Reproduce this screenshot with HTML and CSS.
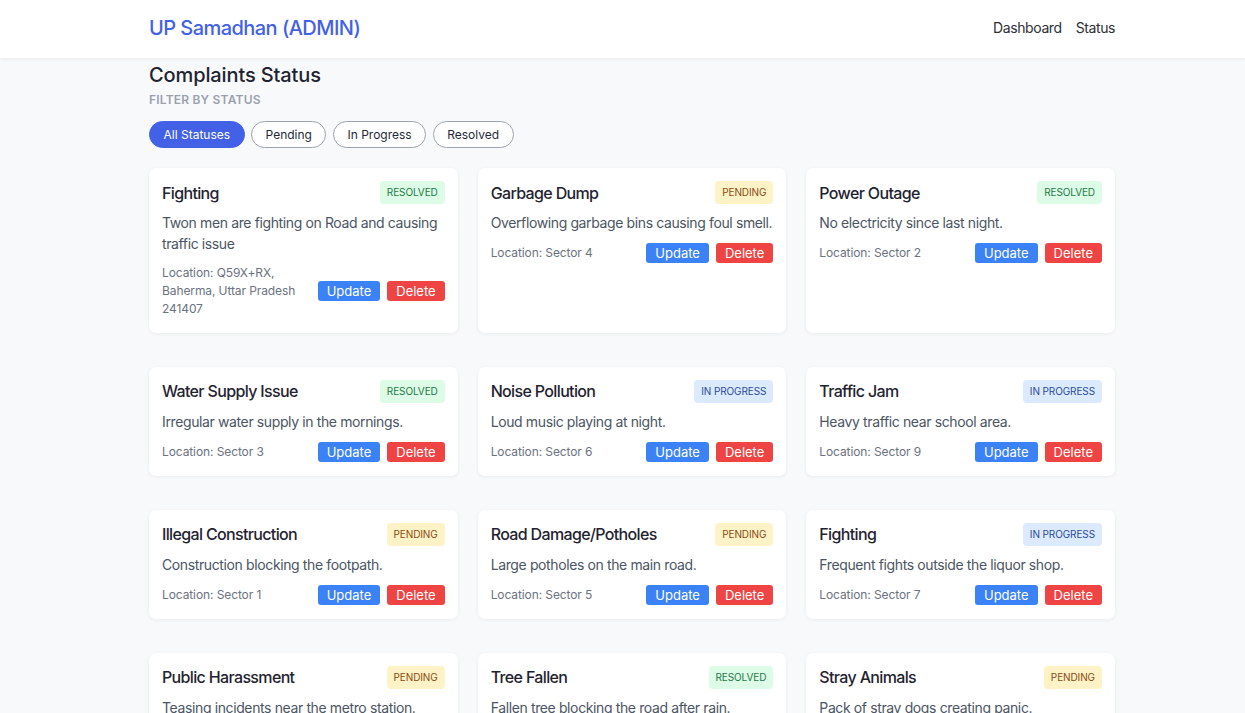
FILE: index.html
```html
<!DOCTYPE html>
<html lang="en">
<head>
<meta charset="utf-8">
<title>UP Samadhan (ADMIN)</title>
<link rel="stylesheet" href="styles.css">
</head>
<body>
<header class="topbar">
  <div class="wrap topbar-inner">
    <div class="brand">UP Samadhan (ADMIN)</div>
    <nav class="nav">
      <a href="#">Dashboard</a>
      <a href="#">Status</a>
    </nav>
  </div>
</header>
<main class="wrap">
  <h1 class="page-title">Complaints Status</h1>
  <div class="filter-label">Filter by status</div>
  <div class="filters">
    <button class="pill active">All Statuses</button>
    <button class="pill">Pending</button>
    <button class="pill">In Progress</button>
    <button class="pill">Resolved</button>
  </div>
  <div class="grid">
    <div class="card">
      <div class="card-head"><h3>Fighting</h3><span class="badge resolved">Resolved</span></div>
      <p class="desc">Twon men are fighting on Road and causing traffic issue</p>
      <div class="card-foot"><span class="loc">Location: Q59X+RX, Baherma, Uttar Pradesh 241407</span><div class="actions"><button class="btn upd">Update</button><button class="btn del">Delete</button></div></div>
    </div>
    <div class="card">
      <div class="card-head"><h3>Garbage Dump</h3><span class="badge pending">Pending</span></div>
      <p class="desc">Overflowing garbage bins causing foul smell.</p>
      <div class="card-foot"><span class="loc">Location: Sector 4</span><div class="actions"><button class="btn upd">Update</button><button class="btn del">Delete</button></div></div>
    </div>
    <div class="card">
      <div class="card-head"><h3>Power Outage</h3><span class="badge resolved">Resolved</span></div>
      <p class="desc">No electricity since last night.</p>
      <div class="card-foot"><span class="loc">Location: Sector 2</span><div class="actions"><button class="btn upd">Update</button><button class="btn del">Delete</button></div></div>
    </div>

    <div class="card">
      <div class="card-head"><h3>Water Supply Issue</h3><span class="badge resolved">Resolved</span></div>
      <p class="desc">Irregular water supply in the mornings.</p>
      <div class="card-foot"><span class="loc">Location: Sector 3</span><div class="actions"><button class="btn upd">Update</button><button class="btn del">Delete</button></div></div>
    </div>
    <div class="card">
      <div class="card-head"><h3>Noise Pollution</h3><span class="badge progress">In Progress</span></div>
      <p class="desc">Loud music playing at night.</p>
      <div class="card-foot"><span class="loc">Location: Sector 6</span><div class="actions"><button class="btn upd">Update</button><button class="btn del">Delete</button></div></div>
    </div>
    <div class="card">
      <div class="card-head"><h3>Traffic Jam</h3><span class="badge progress">In Progress</span></div>
      <p class="desc">Heavy traffic near school area.</p>
      <div class="card-foot"><span class="loc">Location: Sector 9</span><div class="actions"><button class="btn upd">Update</button><button class="btn del">Delete</button></div></div>
    </div>

    <div class="card">
      <div class="card-head"><h3>Illegal Construction</h3><span class="badge pending">Pending</span></div>
      <p class="desc">Construction blocking the footpath.</p>
      <div class="card-foot"><span class="loc">Location: Sector 1</span><div class="actions"><button class="btn upd">Update</button><button class="btn del">Delete</button></div></div>
    </div>
    <div class="card">
      <div class="card-head"><h3>Road Damage/Potholes</h3><span class="badge pending">Pending</span></div>
      <p class="desc">Large potholes on the main road.</p>
      <div class="card-foot"><span class="loc">Location: Sector 5</span><div class="actions"><button class="btn upd">Update</button><button class="btn del">Delete</button></div></div>
    </div>
    <div class="card">
      <div class="card-head"><h3>Fighting</h3><span class="badge progress">In Progress</span></div>
      <p class="desc">Frequent fights outside the liquor shop.</p>
      <div class="card-foot"><span class="loc">Location: Sector 7</span><div class="actions"><button class="btn upd">Update</button><button class="btn del">Delete</button></div></div>
    </div>

    <div class="card">
      <div class="card-head"><h3>Public Harassment</h3><span class="badge pending">Pending</span></div>
      <p class="desc">Teasing incidents near the metro station.</p>
      <div class="card-foot"><span class="loc">Location: Sector 8</span><div class="actions"><button class="btn upd">Update</button><button class="btn del">Delete</button></div></div>
    </div>
    <div class="card">
      <div class="card-head"><h3>Tree Fallen</h3><span class="badge resolved">Resolved</span></div>
      <p class="desc">Fallen tree blocking the road after rain.</p>
      <div class="card-foot"><span class="loc">Location: Sector 10</span><div class="actions"><button class="btn upd">Update</button><button class="btn del">Delete</button></div></div>
    </div>
    <div class="card">
      <div class="card-head"><h3>Stray Animals</h3><span class="badge pending">Pending</span></div>
      <p class="desc">Pack of stray dogs creating panic.</p>
      <div class="card-foot"><span class="loc">Location: Sector 11</span><div class="actions"><button class="btn upd">Update</button><button class="btn del">Delete</button></div></div>
    </div>
  </div>
</main>
</body>
</html>
```

FILE: styles.css
```css
* { box-sizing: border-box; }
html, body { margin: 0; padding: 0; }
body {
  font-family: Inter, "Noto Sans", sans-serif;
  background: #f8f9fb;
  color: #1f2937;
}
.wrap {
  width: 966px;
  margin-left: 149px;
}
.topbar {
  background: #ffffff;
  height: 58px;
  box-shadow: 0 1px 4px rgba(0,0,0,0.07);
}
.topbar-inner {
  height: 58px;
  display: flex;
  align-items: center;
  justify-content: space-between;
}
.brand {
  font-size: 20px;
  font-weight: 500;
  color: #4361e6;
  letter-spacing: -0.55px;
  margin-top: -3px;
}
.nav {
  display: flex;
  gap: 14px;
  margin-top: -3px;
}
.nav a {
  font-size: 14px;
  color: #2d2f36;
  text-decoration: none;
  letter-spacing: -0.4px;
}
.page-title {
  margin: 3px 0 0;
  font-size: 20px;
  line-height: 28px;
  font-weight: 500;
  color: #1f2330;
  letter-spacing: -0.12px;
}
.filter-label {
  margin-top: 3px;
  font-size: 12px;
  line-height: 16px;
  font-weight: 600;
  color: #9aa1ad;
  text-transform: uppercase;
  letter-spacing: 0.2px;
}
.filters {
  display: flex;
  gap: 6.5px;
  margin-top: 13px;
}
.pill {
  font-family: inherit;
  font-size: 12px;
  height: 27px;
  padding: 0 13.5px;
  border-radius: 14px;
  border: 1px solid #9ca3af;
  background: #ffffff;
  color: #1f2937;
  letter-spacing: 0;
}
.pill.active {
  background: #4361e6;
  border-color: #4361e6;
  color: #ffffff;
}
.grid {
  margin-top: 20px;
  display: grid;
  grid-template-columns: repeat(3, 1fr);
  column-gap: 20px;
  row-gap: 34px;
}
.card {
  background: #ffffff;
  border-radius: 7px;
  box-shadow: 0 1px 4px rgba(0,0,0,0.06);
  padding: 13px 13px 14px 13px;
}
.card-head {
  display: flex;
  justify-content: space-between;
  align-items: center;
  height: 23px;
}
.card-head h3 {
  margin: 0;
  font-size: 16px;
  font-weight: 500;
  color: #1f2330;
  letter-spacing: -0.65px;
}
.badge {
  font-size: 10px;
  height: 23px;
  line-height: 23px;
  padding: 0 7px;
  border-radius: 4px;
  text-transform: uppercase;
  letter-spacing: -0.1px;
}
.badge.resolved { background: #dcfce7; color: #1f7a45; }
.badge.pending { background: #fef3c7; color: #8a4a12; }
.badge.progress { background: #dbeafe; color: #2b4a9c; }
.desc {
  margin: 8px 0 0;
  font-size: 14px;
  line-height: 21px;
  color: #4b5563;
  letter-spacing: -0.38px;
}
.card-foot {
  margin-top: 10px;
  display: flex;
  align-items: center;
  justify-content: space-between;
  gap: 12px;
}
.loc {
  font-size: 12px;
  line-height: 18.2px;
  color: #6b7280;
  letter-spacing: -0.1px;
}
.actions {
  display: flex;
  gap: 7px;
  flex: none;
}
.btn {
  font-family: inherit;
  font-size: 13px;
  line-height: 18px;
  height: 20px;
  padding: 1px 9px;
  border: none;
  border-radius: 3px;
  color: #ffffff;
}
.btn.upd { background: #3b82f6; }
.btn.del { background: #ef4444; }
```
